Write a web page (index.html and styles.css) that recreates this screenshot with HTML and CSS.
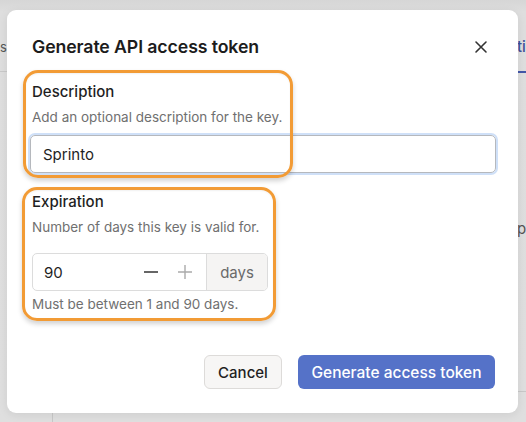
FILE: index.html
```html
<!DOCTYPE html>
<html lang="en">
<head>
<meta charset="utf-8">
<title>Generate API access token</title>
<link rel="stylesheet" href="styles.css">
</head>
<body>
<div class="backdrop">
  <div class="bg-frag bg-s">s</div>
  <div class="bg-line-left"></div>
  <div class="bg-frag bg-ti">ti</div>
  <div class="bg-tab-line"></div>
  <div class="bg-frag bg-p">p</div>
  <div class="bg-vline"></div>
  <div class="bg-hline"></div>

  <div class="modal">
    <div class="modal-header">
      <h1 class="modal-title">Generate API access token</h1>
      <button class="close" aria-label="Close">
        <svg width="14" height="14" viewBox="0 0 14 14"><path d="M2 2L12 12M12 2L2 12" stroke="#333" stroke-width="1.6" fill="none" stroke-linecap="round"/></svg>
      </button>
    </div>

    <div class="field">
      <div class="label">Description</div>
      <div class="help">Add an optional description for the key.</div>
      <div class="input focus">Sprinto</div>
    </div>

    <div class="field field-exp">
      <div class="label">Expiration</div>
      <div class="help">Number of days this key is valid for.</div>
      <div class="stepper">
        <div class="num">90</div>
        <span class="step minus"><svg width="16" height="16" viewBox="0 0 16 16"><path d="M1 8H15" stroke="#333" stroke-width="1.6"/></svg></span>
        <span class="step plus"><svg width="16" height="16" viewBox="0 0 16 16"><path d="M1 8H15M8 1V15" stroke="#aaa" stroke-width="1.4"/></svg></span>
        <div class="addon">days</div>
      </div>
      <div class="help note">Must be between 1 and 90 days.</div>
    </div>

    <div class="footer">
      <button class="btn btn-secondary">Cancel</button>
      <button class="btn btn-primary">Generate access token</button>
    </div>

    <div class="annot annot-1"></div>
    <div class="annot annot-2"></div>
  </div>
</div>
</body>
</html>
```

FILE: styles.css
```css
* { box-sizing: border-box; }
html, body { margin: 0; padding: 0; }
body {
  font-family: Inter, "Noto Sans", "Liberation Sans", sans-serif;
  color: #1f1f1f;
  background: #dcdcdc;
}
.backdrop {
  position: relative;
  width: 526px;
  height: 422px;
  padding: 10px 8px 0 7px;
  background: linear-gradient(#d6d6d6, #dedede 12px, #dfdfdf);
  overflow: hidden;
}
.bg-frag {
  position: absolute;
  font-size: 15px;
  line-height: 20px;
}
.bg-s { left: 0; top: 37px; font-size: 13px; color: #555; }
.bg-ti { left: 517px; top: 37px; color: #3d4f9a; font-weight: 500; }
.bg-p { left: 517px; top: 219px; color: #555; }
.bg-line-left { position: absolute; left: 0; top: 71px; width: 8px; height: 1px; background: #c9c9c9; }
.bg-tab-line { position: absolute; left: 518px; top: 71px; width: 8px; height: 2px; background: #4457a8; }
.bg-vline { position: absolute; left: 52px; top: 413px; width: 1px; height: 10px; background: #c8c8c8; }
.bg-hline { position: absolute; left: 518px; top: 391px; width: 8px; height: 1px; background: #c8c8c8; }

.modal {
  position: relative;
  width: 511px;
  height: 403px;
  background: #fff;
  border-radius: 9px;
  box-shadow: 0 2px 10px rgba(0,0,0,0.08);
  padding: 26px 23px 0 25px;
}
.modal-header {
  display: flex;
  align-items: center;
  justify-content: space-between;
  height: 22px;
}
.modal-title {
  margin: 0;
  font-size: 17.7px;
  font-weight: 600;
  line-height: 22px;
  color: #1c1c1c;
  letter-spacing: -0.1px;
}
.close {
  border: 0;
  background: none;
  padding: 0;
  margin-right: 7px;
  width: 14px;
  height: 14px;
  display: flex;
}
.field { margin-top: 24px; }
.field-exp { margin-top: 19px; }
.label {
  font-size: 15px;
  font-weight: 500;
  line-height: 20px;
  color: #1f1f1f;
}
.help {
  font-size: 13.5px;
  line-height: 18px;
  color: #707070;
  margin-top: 6px;
}
.input {
  margin-top: 9px;
  margin-left: -2px;
  width: 466px;
  height: 38px;
  border: 1px solid #a9a9a9;
  border-radius: 5px;
  padding: 0 12px;
  display: flex;
  align-items: center;
  font-size: 15px;
  color: #1f1f1f;
}
.input.focus { box-shadow: 0 0 0 2px #cfe0f8; border-color: #b5b8bd; }
.stepper {
  margin-top: 17px;
  width: 236px;
  height: 38px;
  border: 1px solid #dcdcdc;
  border-radius: 5px;
  display: flex;
  align-items: center;
  overflow: hidden;
}
.num {
  flex: 1;
  padding-left: 11px;
  font-size: 15px;
  color: #1f1f1f;
}
.step {
  display: flex;
  width: 16px;
  height: 16px;
}
.minus { margin-right: 18px; }
.plus { margin-right: 13px; }
.addon {
  height: 100%;
  width: 61px;
  background: #f5f4f3;
  border-left: 1px solid #dcdcdc;
  display: flex;
  align-items: center;
  justify-content: center;
  font-size: 15px;
  color: #6a6a6a;
}
.note { margin-top: 4px; }
.footer {
  margin-top: 42px;
  display: flex;
  justify-content: flex-end;
  gap: 16px;
}
.btn {
  height: 34px;
  border-radius: 6px;
  font-family: inherit;
  font-size: 15px;
  font-weight: 500;
  padding: 0 10px;
  cursor: pointer;
}
.btn-secondary {
  width: 78px;
  background: #f7f6f5;
  border: 1px solid #dddbd9;
  color: #1f1f1f;
}
.btn-primary {
  width: 197px;
  background: #5572c8;
  border: 0;
  color: #fff;
  font-size: 15.5px;
}
.annot {
  position: absolute;
  border: 3.5px solid #f29b35;
  border-radius: 15px;
  box-shadow: 0 3px 5px rgba(0,0,0,0.18), inset 0 1px 2px rgba(0,0,0,0.06);
  pointer-events: none;
}
.annot-1 { left: 16px; top: 60px; width: 270px; height: 108px; }
.annot-2 { left: 15px; top: 177px; width: 254px; height: 134px; }
```
